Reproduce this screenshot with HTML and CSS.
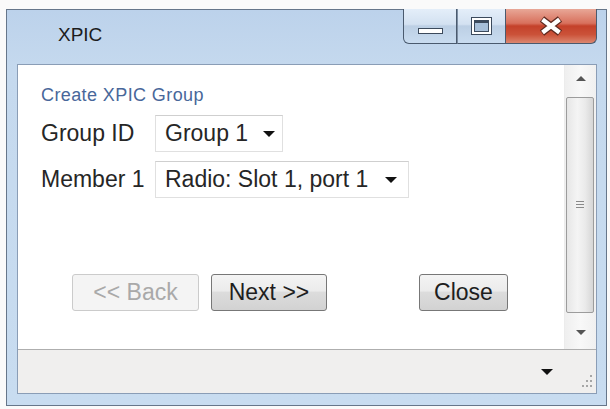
FILE: index.html
```html
<!DOCTYPE html>
<html lang="en">
<head>
<meta charset="utf-8">
<title>XPIC</title>
<link rel="stylesheet" href="styles.css">
</head>
<body>
<div class="window">
  <div class="titlebar">
    <span class="title">XPIC</span>
    <div class="caption-buttons">
      <div class="cbtn cbtn-min"><span class="min-icon"></span></div>
      <div class="cbtn cbtn-max"><span class="max-icon"><span class="max-inner"></span></span></div>
      <div class="cbtn cbtn-close">
        <svg class="close-icon" width="28" height="20" viewBox="0 0 28 20">
          <path d="M5 3 L23 17 M23 3 L5 17" stroke="#5e2a20" stroke-width="7" fill="none"/>
          <path d="M5.5 3.5 L22.5 16.5 M22.5 3.5 L5.5 16.5" stroke="#ffffff" stroke-width="4.5" fill="none"/>
        </svg>
      </div>
    </div>
  </div>
  <div class="client">
    <div class="main">
      <div class="content">
        <div class="heading">Create XPIC Group</div>
        <div class="form">
          <span class="label">Group ID</span>
          <div class="select select-group"><span class="select-text">Group 1</span><span class="arrow"></span></div>
          <span class="label">Member 1</span>
          <div class="select select-member"><span class="select-text">Radio: Slot 1, port 1</span><span class="arrow"></span></div>
        </div>
        <div class="actions">
          <button class="btn btn-back" disabled>&lt;&lt; Back</button>
          <button class="btn btn-next">Next &gt;&gt;</button>
          <button class="btn btn-close">Close</button>
        </div>
      </div>
      <div class="vscroll">
        <div class="sb-btn sb-up"><span class="tri-up"></span></div>
        <div class="thumb"><span class="grip"></span></div>
        <div class="sb-btn sb-down"><span class="tri-down"></span></div>
      </div>
    </div>
    <div class="status">
      <span class="status-arrow"></span>
      <div class="grip-area">
        <svg width="16" height="16" viewBox="0 0 16 16">
          <g fill="#a6a6a6">
            <rect x="12" y="1" width="2" height="2"/>
            <rect x="8" y="6" width="2" height="2"/>
            <rect x="12" y="6" width="2" height="2"/>
            <rect x="4" y="11" width="2" height="2"/>
            <rect x="8" y="11" width="2" height="2"/>
            <rect x="12" y="11" width="2" height="2"/>
          </g>
        </svg>
      </div>
    </div>
  </div>
</div>
</body>
</html>
```

FILE: styles.css
```css
* { box-sizing: border-box; }

html, body {
  margin: 0;
  padding: 0;
  background: #fafafa;
  font-family: "Liberation Sans", Arial, sans-serif;
}

body {
  padding: 9px 0 0 6px;
}

.window {
  width: 601px;
  height: 397px;
  border: 1px solid #66768a;
  background: linear-gradient(180deg, #bcd2eb 0%, #c5d9ee 15%, #c8dcf0 100%);
  padding: 0 9px 11px 10px;
  display: flex;
  flex-direction: column;
}

.titlebar {
  height: 54px;
  display: flex;
  align-items: flex-start;
  justify-content: space-between;
}

.title {
  font-size: 19px;
  line-height: 22px;
  color: #1c1c1c;
  margin: 14px 0 0 41px;
}

.caption-buttons {
  display: flex;
  margin-top: -1px;
}

.cbtn {
  height: 35px;
  border: 1px solid #4a5a6e;
  border-top: none;
  display: flex;
  align-items: center;
  justify-content: center;
}

.cbtn-min {
  width: 54px;
  border-radius: 0 0 0 6px;
  background: linear-gradient(180deg, #e4eef9 0%, #d3e1f1 45%, #bccfe4 50%, #c9dcf0 100%);
  align-items: flex-end;
}

.cbtn-max {
  width: 49px;
  border-left: 1px solid #7d8ea3;
  background: linear-gradient(180deg, #e4eef9 0%, #d3e1f1 45%, #bccfe4 50%, #c9dcf0 100%);
}

.cbtn-close {
  width: 91px;
  border-left: none;
  border-radius: 0 0 6px 0;
  background: linear-gradient(180deg, #e8a797 0%, #d8705c 42%, #c4412a 50%, #cb5239 75%, #dc8770 100%);
}

.min-icon {
  width: 25px;
  height: 6px;
  border: 1px solid #3c4a5c;
  background: #ffffff;
  margin-bottom: 9px;
}

.max-icon {
  width: 21px;
  height: 18px;
  border: 1px solid #3c4a5c;
  background: #ffffff;
  padding: 2px;
  display: flex;
}

.max-inner {
  flex: 1;
  border: 1px solid #3c4a5c;
  border-top-width: 3px;
  background: #a7bfd9;
}

.client {
  flex: 1;
  border: 1px solid #8a9db6;
  background: #ffffff;
  display: flex;
  flex-direction: column;
}

.main {
  flex: 1;
  display: flex;
}

.content {
  flex: 1;
  padding: 20px 0 0 23px;
}

.heading {
  font-size: 18px;
  line-height: 21px;
  letter-spacing: 0.4px;
  color: #48679a;
}

.form {
  margin-top: 9px;
  display: grid;
  grid-template-columns: 114px auto;
  row-gap: 9px;
  justify-items: start;
  align-items: center;
  font-size: 23px;
  color: #262626;
}

.select {
  height: 37px;
  display: flex;
  align-items: center;
  border: 1px solid #e0e0e0;
  border-top-color: #cfcfcf;
  padding: 0 7px 0 9px;
  background: #ffffff;
}

.select-group { width: 128px; }

.select-member {
  width: 254px;
  padding-right: 11px;
}

.arrow {
  width: 0;
  height: 0;
  border-left: 6px solid transparent;
  border-right: 6px solid transparent;
  border-top: 6px solid #111111;
  margin-left: auto;
  margin-top: 1px;
}

.actions {
  display: flex;
  margin-top: 76px;
  padding-left: 31px;
}

.btn {
  height: 37px;
  font-family: "Liberation Sans", Arial, sans-serif;
  font-size: 23px;
  color: #1e1e1e;
  border: 1px solid #777777;
  border-radius: 3px;
  background: linear-gradient(180deg, #f4f4f4 0%, #ebebeb 45%, #dcdcdc 50%, #d2d2d2 100%);
  padding: 0;
}

.btn-back {
  width: 127px;
  color: #a9a9a9;
  border-color: #cbcbcb;
  background: #f4f4f4;
}

.btn-next {
  width: 116px;
  margin-left: 12px;
}

.btn-close {
  width: 89px;
  margin-left: 92px;
}

.vscroll {
  width: 32px;
  background: linear-gradient(90deg, #efefef 0%, #f8f8f8 50%, #f0f0f0 100%);
  border-left: 1px solid #ececec;
  display: flex;
  flex-direction: column;
}

.sb-btn {
  display: flex;
  justify-content: center;
}

.sb-up {
  height: 32px;
  padding-top: 11px;
}

.sb-down {
  flex: 1;
  padding-top: 17px;
}

.tri-up {
  width: 0;
  height: 0;
  border-left: 5px solid transparent;
  border-right: 5px solid transparent;
  border-bottom: 5px solid #555555;
}

.tri-down {
  width: 0;
  height: 0;
  border-left: 5px solid transparent;
  border-right: 5px solid transparent;
  border-top: 5px solid #555555;
}

.thumb {
  height: 216px;
  margin: 0 2px 0 1px;
  border: 1px solid #9c9c9c;
  border-radius: 2px;
  background: linear-gradient(90deg, #e6e6e6 0%, #f4f4f4 40%, #eaeaea 70%, #d6d6d6 100%);
  display: flex;
  align-items: center;
  justify-content: center;
}

.grip {
  width: 8px;
  height: 9px;
  background: repeating-linear-gradient(180deg, #8a8a8a 0, #8a8a8a 1px, transparent 1px, transparent 3px);
}

.status {
  height: 44px;
  border-top: 1px solid #aeaeae;
  background: #f0efee;
  display: flex;
  align-items: center;
  justify-content: flex-end;
}

.status-arrow {
  width: 0;
  height: 0;
  border-left: 6px solid transparent;
  border-right: 6px solid transparent;
  border-top: 6px solid #111111;
  margin-right: 11px;
}

.grip-area {
  width: 32px;
  align-self: stretch;
  display: flex;
  align-items: flex-end;
  justify-content: flex-end;
  padding: 0 2px 3px 0;
}
```
